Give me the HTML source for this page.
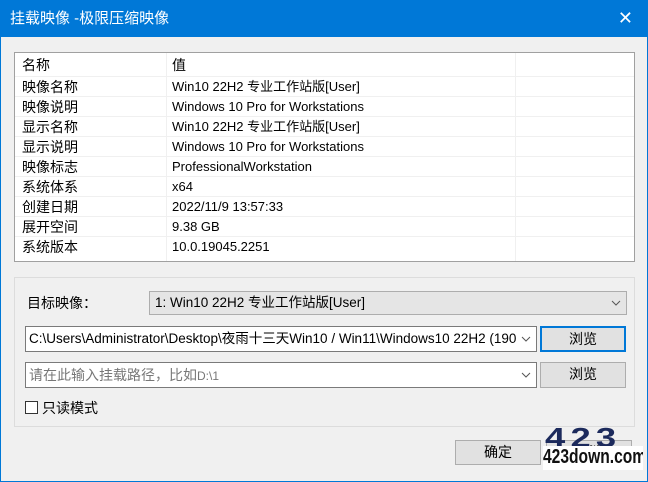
<!DOCTYPE html>
<html><head><meta charset="utf-8"><style>
*{box-sizing:border-box;margin:0;padding:0}
body{width:648px;height:482px;background:#f0f0f0;font-family:"Liberation Sans","Noto Sans CJK SC",sans-serif;position:relative;overflow:hidden;border:1px solid #0078d7;border-top:none}
.title{position:absolute;left:0;top:0;width:648px;height:37px;background:#0078d7;color:#fff;font-size:15px;line-height:37px;padding-left:9px}
.x{position:absolute;right:14px;top:0;color:#fff;font-size:18px;line-height:37px}
.tbl{position:absolute;left:13px;top:52px;width:621px;height:210px;background:#fff;border:1px solid #a0a0a0}
.row{position:absolute;left:0;width:619px;height:20px;border-bottom:1px solid #f0f0f0;font-size:13px;line-height:20px}
.c1{position:absolute;left:7px;font-size:14px}
.c2{position:absolute;left:157px;color:#000}
.v1{position:absolute;left:151px;top:0;width:1px;height:208px;background:#f0f0f0}
.v2{position:absolute;left:500px;top:0;width:1px;height:208px;background:#f0f0f0}
.grp{position:absolute;left:13px;top:277px;width:621px;height:150px;border:1px solid #dcdcdc}
.box{position:absolute;font-size:13.5px;line-height:22px;padding-left:5px;white-space:nowrap;overflow:hidden}
.chev{position:absolute;right:0;top:0;width:20px;height:100%;background:inherit}
.chev svg{position:absolute;left:5px;top:50%;margin-top:-3px}
.btn{position:absolute;background:#e1e1e1;border:1px solid #adadad;text-align:center;font-size:14px;line-height:23px}
</style></head><body>
<div class="title">挂载映像 -极限压缩映像</div>
<div class="x">✕</div>
<div class="tbl">
<div class="v1"></div><div class="v2"></div>
<div class="row" style="top:0;height:24px;line-height:24px"><span class="c1">名称</span><span class="c2" style="font-size:14px">值</span></div>
<div class="row" style="top:24px"><span class="c1">映像名称</span><span class="c2">Win10 22H2 专业工作站版[User]</span></div>
<div class="row" style="top:44px"><span class="c1">映像说明</span><span class="c2">Windows 10 Pro for Workstations</span></div>
<div class="row" style="top:64px"><span class="c1">显示名称</span><span class="c2">Win10 22H2 专业工作站版[User]</span></div>
<div class="row" style="top:84px"><span class="c1">显示说明</span><span class="c2">Windows 10 Pro for Workstations</span></div>
<div class="row" style="top:104px"><span class="c1">映像标志</span><span class="c2">ProfessionalWorkstation</span></div>
<div class="row" style="top:124px"><span class="c1">系统体系</span><span class="c2">x64</span></div>
<div class="row" style="top:144px"><span class="c1">创建日期</span><span class="c2">2022/11/9 13:57:33</span></div>
<div class="row" style="top:164px"><span class="c1">展开空间</span><span class="c2">9.38 GB</span></div>
<div class="row" style="top:184px;border:none"><span class="c1">系统版本</span><span class="c2">10.0.19045.2251</span></div>
</div>
<div class="grp"></div>
<div style="position:absolute;left:26px;top:292px;font-size:14px;line-height:22px">目标映像：</div>
<div class="box" style="left:148px;top:291px;width:478px;height:24px;background:#e5e5e5;border:1px solid #adadad">1: Win10 22H2 专业工作站版[User]<span class="chev"><svg width="10" height="6"><path d="M1 1L5 5L9 1" fill="none" stroke="#555"/></svg></span></div>
<div class="box" style="left:24px;top:326px;width:512px;height:26px;background:#fff;border:1px solid #7a7a7a;line-height:24px;padding-left:3px">C:\Users\Administrator\Desktop\夜雨十三天Win10 / Win11\Windows10 22H2 (1904<span class="chev"><svg width="10" height="6"><path d="M1 1L5 5L9 1" fill="none" stroke="#555"/></svg></span></div>
<div class="btn" style="left:539px;top:326px;width:86px;height:26px;border:2px solid #0078d7;line-height:22px">浏览</div>
<div class="box" style="left:24px;top:362px;width:512px;height:26px;background:#fff;border:1px solid #7a7a7a;line-height:24px;color:#777;font-size:14px;padding-left:3px">请在此输入挂载路径，比如<span style="font-size:12px">D:\1</span><span class="chev"><svg width="10" height="6"><path d="M1 1L5 5L9 1" fill="none" stroke="#555"/></svg></span></div>
<div class="btn" style="left:539px;top:362px;width:86px;height:26px">浏览</div>
<div style="position:absolute;left:24px;top:401px;width:13px;height:13px;border:1px solid #333;background:#fff"></div>
<div style="position:absolute;left:41px;top:397px;font-size:14px;line-height:22px">只读模式</div>
<div class="btn" style="left:454px;top:440px;width:86px;height:25px">确定</div>
<div class="btn" style="left:545px;top:440px;width:86px;height:25px">取消</div>
<div style="position:absolute;left:542px;top:426px;width:100px;height:44px;overflow:hidden">
<div style="position:absolute;left:2px;top:-4px;font:bold 28px 'Liberation Sans',sans-serif;color:#1c2a5c;letter-spacing:4px;transform:scaleX(1.3);transform-origin:left">423</div>
<div style="position:absolute;left:0;top:20px;width:100px;height:24px;background:#fff;font:bold 20px 'Liberation Sans',sans-serif;color:#111;white-space:nowrap"><span style="display:inline-block;transform:scaleX(.78);transform-origin:left">423down.com</span></div>
</div>
</body></html>
